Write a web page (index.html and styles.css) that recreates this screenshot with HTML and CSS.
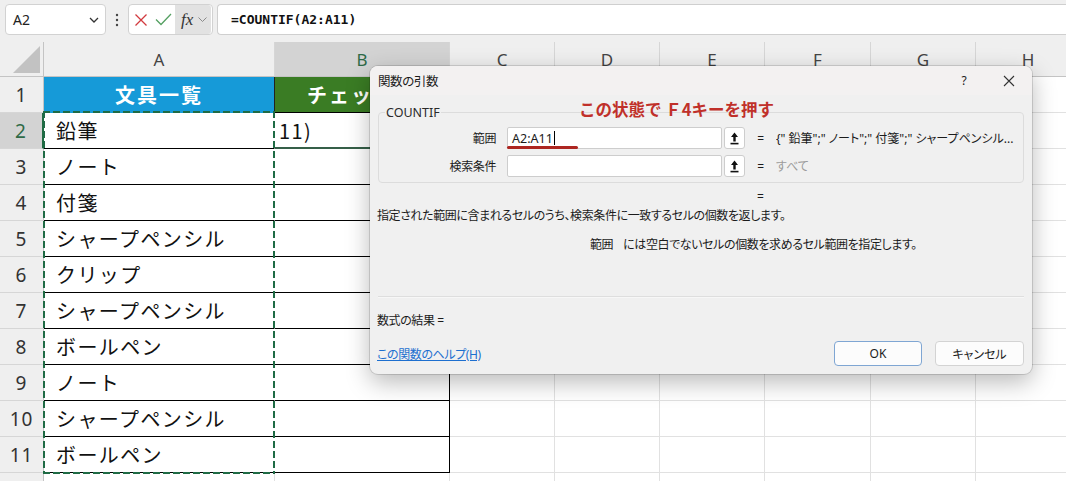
FILE: index.html
```html
<!DOCTYPE html>
<html lang="ja">
<head>
<meta charset="utf-8">
<title>COUNTIF</title>
<link rel="stylesheet" href="styles.css">
</head>
<body>
<div class="toolbar">
  <div class="namebox"><span>A2</span><svg class="chev" width="10" height="6" viewBox="0 0 10 6"><polyline points="1,1 5,5 9,1"/></svg></div>
  <div class="more"><svg width="4" height="14" viewBox="0 0 4 14"><circle cx="2" cy="2" r="1.2"/><circle cx="2" cy="7" r="1.2"/><circle cx="2" cy="12" r="1.2"/></svg></div>
  <div class="fxgroup">
    <span class="fxbtn"><svg width="14" height="14" viewBox="0 0 14 14"><path d="M1.5 1.5L12.5 12.5M12.5 1.5L1.5 12.5" stroke="#d23a3f" stroke-width="1.3" fill="none"/></svg></span>
    <span class="fxbtn"><svg width="17" height="13" viewBox="0 0 17 13"><path d="M1 6.5L6 11.5L16 1" fill="none" stroke="#55a062" stroke-width="1.3"/></svg></span>
    <span class="fxins"><span class="fxlabel">fx</span><svg class="chev small" width="9" height="5" viewBox="0 0 9 5"><polyline points="0.5,0.5 4.5,4.5 8.5,0.5"/></svg></span>
  </div>
  <div class="formula">=COUNTIF(A2:A11)</div>
</div>

<div class="sheet">
  <div class="row hdr">
    <div class="corner"></div><div class="ch">A</div><div class="ch sel">B</div><div class="ch">C</div><div class="ch">D</div><div class="ch">E</div><div class="ch">F</div><div class="ch">G</div><div class="ch">H</div>
  </div>
  <div class="row">
    <div class="rh">1</div><div class="c a1">文具一覧</div><div class="c b1">チェック数</div><div class="c"></div><div class="c"></div><div class="c"></div><div class="c"></div><div class="c"></div><div class="c"></div>
  </div>
  <div class="row">
    <div class="rh act">2</div><div class="c ta">鉛筆</div><div class="c tb b2">11)</div><div class="c"></div><div class="c"></div><div class="c"></div><div class="c"></div><div class="c"></div><div class="c"></div>
  </div>
  <div class="row">
    <div class="rh">3</div><div class="c ta">ノート</div><div class="c tb"></div><div class="c"></div><div class="c"></div><div class="c"></div><div class="c"></div><div class="c"></div><div class="c"></div>
  </div>
  <div class="row">
    <div class="rh">4</div><div class="c ta">付箋</div><div class="c tb"></div><div class="c"></div><div class="c"></div><div class="c"></div><div class="c"></div><div class="c"></div><div class="c"></div>
  </div>
  <div class="row">
    <div class="rh">5</div><div class="c ta">シャープペンシル</div><div class="c tb"></div><div class="c"></div><div class="c"></div><div class="c"></div><div class="c"></div><div class="c"></div><div class="c"></div>
  </div>
  <div class="row">
    <div class="rh">6</div><div class="c ta">クリップ</div><div class="c tb"></div><div class="c"></div><div class="c"></div><div class="c"></div><div class="c"></div><div class="c"></div><div class="c"></div>
  </div>
  <div class="row">
    <div class="rh">7</div><div class="c ta">シャープペンシル</div><div class="c tb"></div><div class="c"></div><div class="c"></div><div class="c"></div><div class="c"></div><div class="c"></div><div class="c"></div>
  </div>
  <div class="row">
    <div class="rh">8</div><div class="c ta">ボールペン</div><div class="c tb"></div><div class="c"></div><div class="c"></div><div class="c"></div><div class="c"></div><div class="c"></div><div class="c"></div>
  </div>
  <div class="row">
    <div class="rh">9</div><div class="c ta">ノート</div><div class="c tb"></div><div class="c"></div><div class="c"></div><div class="c"></div><div class="c"></div><div class="c"></div><div class="c"></div>
  </div>
  <div class="row">
    <div class="rh">10</div><div class="c ta">シャープペンシル</div><div class="c tb"></div><div class="c"></div><div class="c"></div><div class="c"></div><div class="c"></div><div class="c"></div><div class="c"></div>
  </div>
  <div class="row">
    <div class="rh">11</div><div class="c ta">ボールペン</div><div class="c tb"></div><div class="c"></div><div class="c"></div><div class="c"></div><div class="c"></div><div class="c"></div><div class="c"></div>
  </div>
  <div class="row last">
    <div class="rh"></div><div class="c"></div><div class="c"></div><div class="c"></div><div class="c"></div><div class="c"></div><div class="c"></div><div class="c"></div><div class="c"></div>
  </div>
  <div class="ants"></div>
</div>

<div class="dialog">
  <div class="dtitle">
    <span class="dname">関数の引数</span>
    <span class="help">?</span>
    <span class="close"><svg width="12" height="12" viewBox="0 0 12 12"><path d="M1 1L11 11M11 1L1 11" stroke="#333" stroke-width="1.1" fill="none"/></svg></span>
  </div>
  <div class="dbody">
    <div class="group">
      <span class="legend">COUNTIF</span>
      <div class="arg">
        <span class="lbl">範囲</span>
        <div class="input"><span class="itext">A2:A11</span><i class="caret"></i></div>
        <span class="ref"><svg width="9" height="13" viewBox="0 0 9 13"><path d="M4.5 0.5L8 5H5.7V9.5H3.3V5H1Z" fill="#111"/><rect x="0.5" y="10.8" width="8" height="1.6" fill="#111"/></svg></span>
        <span class="eq">=</span>
        <span class="val">{" 鉛筆";" ノート";" 付箋";" シャープペンシル...</span>
      </div>
      <div class="arg">
        <span class="lbl">検索条件</span>
        <div class="input"></div>
        <span class="ref"><svg width="9" height="13" viewBox="0 0 9 13"><path d="M4.5 0.5L8 5H5.7V9.5H3.3V5H1Z" fill="#111"/><rect x="0.5" y="10.8" width="8" height="1.6" fill="#111"/></svg></span>
        <span class="eq">=</span>
        <span class="val muted">すべて</span>
      </div>
    </div>
    <div class="reseq">=</div>
    <p class="desc">指定された範囲に含まれるセルのうち、検索条件に一致するセルの個数を返します。</p>
    <p class="desc2"><span class="argname">範囲</span>には空白でないセルの個数を求めるセル範囲を指定します。</p>
    <div class="sep"></div>
    <div class="result">数式の結果 =</div>
    <div class="foot">
      <a class="hlink">この関数のヘルプ(H)</a>
      <div class="btns"><span class="btn ok">OK</span><span class="btn">キャンセル</span></div>
    </div>
  </div>
  <div class="hint">この状態で Ｆ4キーを押す</div>
  <div class="uline"></div>
</div>
</body>
</html>
```

FILE: styles.css
```css
* { box-sizing: border-box; margin: 0; padding: 0; }
html, body { width: 1066px; height: 481px; overflow: hidden; background: #fff; }
body { position: relative; font-family: "Noto Sans", "Noto Sans CJK JP", sans-serif; color: #222; }

/* toolbar */
.toolbar { height: 42px; background: #efefef; display: flex; align-items: flex-start; padding: 4px 0 0 5px; }
.namebox { width: 101px; height: 31px; background: #fff; border: 1px solid #d2d2d2; border-radius: 4px; display: flex; align-items: center; justify-content: space-between; padding: 0 6px 0 7px; font-size: 14px; color: #222; }
.chev { fill: none; stroke: #333; stroke-width: 1.3; }
.chev.small { stroke: #8a8a8a; stroke-width: 1; }
.more { width: 22px; height: 31px; display: flex; align-items: center; justify-content: center; }
.more svg { fill: #444; }
.fxgroup { width: 85px; height: 31px; background: #fff; border: 1px solid #d2d2d2; border-radius: 4px; display: flex; align-items: stretch; }
.fxbtn { width: 23px; display: flex; align-items: center; justify-content: center; }
.fxins { width: 36px; background: #e2e2e2; border-radius: 0 3px 3px 0; display: flex; align-items: center; justify-content: flex-start; padding-left: 6px; gap: 2px; }
.fxlabel { font-family: "Liberation Serif", serif; font-style: italic; font-size: 17px; color: #333; width: 15px; }
.formula { flex: 1; height: 31px; margin-left: 4px; background: #fff; border: 1px solid #cfcfcf; border-right: 0; border-radius: 4px 0 0 4px; padding-left: 13px; display: flex; align-items: center; font-family: "DejaVu Sans Mono", monospace; font-weight: bold; font-size: 13px; color: #111; }

/* sheet */
.sheet { position: relative; }
.row { display: grid; grid-template-columns: 44px 231px 175px 105px 105px 105px 106px 105px 105px; height: 36px; }
.row.hdr { height: 35px; }
.row.last { height: 8px; }
.row > div { border-right: 1px solid #e1e1e1; border-bottom: 1px solid #e1e1e1; }
.row.last > div { border-bottom: 0; }
.corner { background: #efefef; position: relative; border-right-color: #c4c4c4 !important; border-bottom-color: #c4c4c4 !important; }
.corner::after { content: ""; position: absolute; right: 3px; bottom: 3px; width: 27px; height: 27px; background: #c2c2c2; clip-path: polygon(100% 0, 100% 100%, 0 100%); }
.ch { background: #efefef; border-right-color: #d6d6d6 !important; border-bottom-color: #c4c4c4 !important; display: flex; align-items: center; justify-content: center; font-size: 17px; color: #444; }
.ch.sel { background: #d3d3d3; color: #2f6a47; }
.rh { background: #efefef; border-right-color: #c4c4c4 !important; border-bottom-color: #d6d6d6 !important; display: flex; align-items: center; justify-content: center; font-size: 19px; letter-spacing: 1px; color: #333; }
.rh.act { background: #d3d3d3; color: #2f6a47; border-right: 2px solid #1f6b43 !important; }
.c { display: flex; align-items: center; padding-left: 12px; font-family: "Noto Sans CJK JP", sans-serif; font-size: 20px; letter-spacing: 1.4px; color: #111; white-space: nowrap; overflow: hidden; }
.c.a1 { background: #169ad8; color: #fff; font-weight: bold; justify-content: center; padding-left: 0; letter-spacing: 2px; border-right: 1px solid #222; border-bottom-color: #169ad8; }
.c.b1 { background: #3a7c24; color: #fff; font-weight: bold; justify-content: center; padding-left: 0; letter-spacing: 2px; border-right-color: #000; border-bottom-color: #000; }
.c.ta { border-bottom-color: #000; border-right-color: #fff; }
.c.tb { border-bottom-color: #000; border-right-color: #000; padding-left: 4px; }
.c.b2 { border-bottom: 2px solid #355f48; }
.ants { position: absolute; left: 43px; top: 69px; width: 232px; height: 363px;
  background:
    repeating-linear-gradient(90deg, #1f6b45 0 7px, transparent 7px 10px) left top / 100% 2px no-repeat,
    repeating-linear-gradient(90deg, #1f6b45 0 7px, transparent 7px 10px) left bottom / 100% 2px no-repeat,
    repeating-linear-gradient(180deg, #1f6b45 0 7px, transparent 7px 10px) left top / 2px 100% no-repeat,
    repeating-linear-gradient(180deg, #1f6b45 0 7px, transparent 7px 10px) right top / 2px 100% no-repeat; }

/* dialog */
.dialog { position: absolute; left: 370px; top: 66px; width: 662px; height: 308px; background: #f0f0f0; border-radius: 8px; overflow: hidden; box-shadow: 0 0 0 1px rgba(0,0,0,0.13), 0 8px 24px rgba(0,0,0,0.28); font-size: 12px; letter-spacing: -0.4px; color: #1b1b1b; font-feature-settings: "palt"; }
.dtitle { height: 29px; background: #f3f1f1; display: flex; align-items: center; padding: 0 8px 0 8px; }
.dname { font-size: 12.5px; flex: 1; }
.help { width: 20px; text-align: center; font-size: 12px; }
.close { width: 30px; margin-left: 20px; display: flex; justify-content: center; align-items: center; }
.dbody { padding: 0 8px 8px; }
.group { position: relative; margin-top: 17px; height: 71px; border: 1px solid #dcdcdc; border-radius: 4px; padding-top: 14px; display: flex; flex-direction: column; gap: 6px; }
.legend { position: absolute; left: 6px; top: -8px; padding: 0 1px; background: #f0f0f0; font-size: 12.5px; line-height: 16px; letter-spacing: 0; color: #2a2a2a; }
.arg { display: grid; grid-template-columns: 128px 215px 23px 31px 1fr; height: 22px; align-items: center; }
.lbl { text-align: right; padding-right: 11px; }
.input { height: 22px; background: #fff; border: 1px solid #cdcdcd; border-radius: 2px; display: flex; align-items: center; padding-left: 4px; font-size: 12.5px; letter-spacing: 0; }
.caret { display: inline-block; width: 1px; height: 14px; background: #000; margin-left: 1px; }
.ref { margin-left: 2px; height: 22px; background: #fff; border: 1px solid #cdcdcd; border-radius: 3px; display: flex; align-items: center; justify-content: center; }
.eq { text-align: center; }
.val { white-space: nowrap; overflow: hidden; letter-spacing: 0; }
.val.muted { color: #9b9b9b; }
.reseq { margin-top: 6px; height: 16px; line-height: 16px; padding-left: 379px; }
.desc { margin-top: 3px; height: 16px; line-height: 16px; margin-left: -1px; }
.desc2 { margin-top: 13px; height: 16px; line-height: 16px; padding-left: 212px; }
.argname { margin-right: 10px; }
.sep { margin-top: 43px; height: 2px; border-top: 1px solid #dedede; border-bottom: 1px solid #f7f7f7; }
.result { margin-top: 15px; height: 16px; line-height: 16px; margin-left: -1px; }
.foot { margin-top: 12px; height: 25px; display: flex; align-items: center; justify-content: space-between; }
.hlink { color: #1d6fcf; text-decoration: underline; margin-left: -1px; }
.btns { display: flex; gap: 13px; }
.btn { height: 25px; width: 89px; display: flex; align-items: center; justify-content: center; background: #fcfcfc; border: 1px solid #d3d3d3; border-radius: 4px; font-size: 12px; letter-spacing: 0; }
.btn.ok { width: 88px; border-color: #7fa6d3; }
.hint { position: absolute; left: 209px; top: 34px; font-size: 16.5px; line-height: 18px; font-weight: bold; letter-spacing: 0; color: #c0302a; font-family: "Noto Sans CJK JP", sans-serif; font-feature-settings: normal; }
.uline { position: absolute; left: 137px; top: 80px; width: 71px; height: 3px; border-radius: 2px; background: #ad2621; }
```
